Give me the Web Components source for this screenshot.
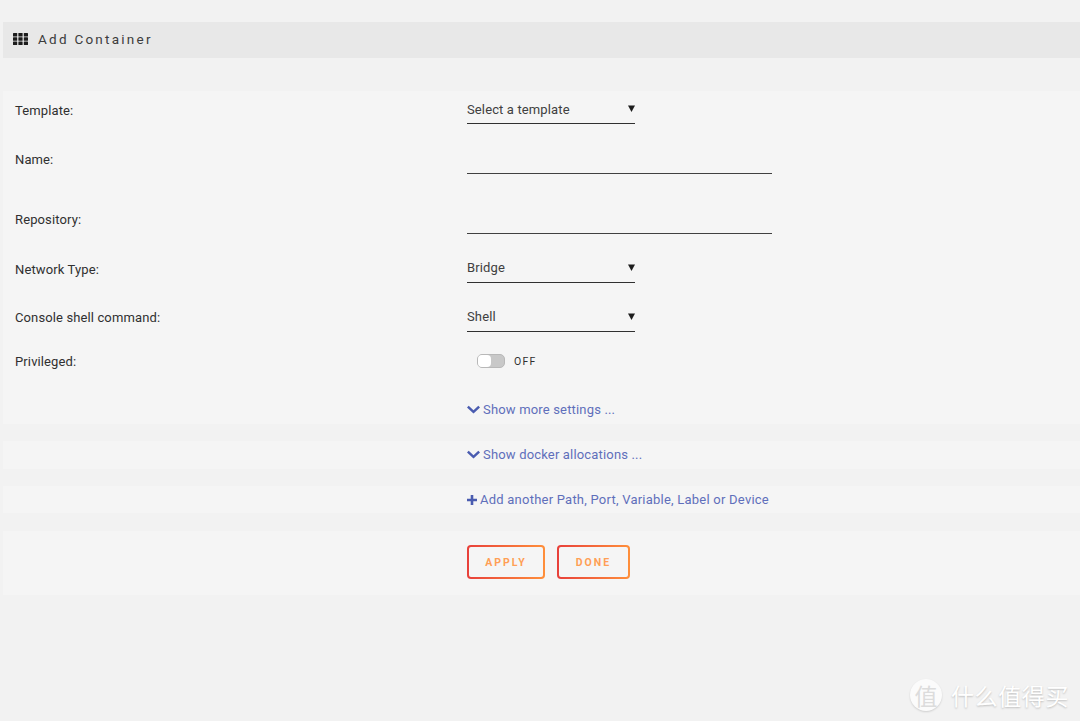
<!DOCTYPE html>
<html>
<head>
<meta charset="utf-8">
<title>Add Container</title>
<style>
  html, body { margin: 0; height: 100%; }
  body {
    background: #f2f2f2;
    padding: 22px 0 0 3px;
    box-sizing: border-box;
    overflow: hidden;
    position: relative;
    font-family: Roboto, "Open Sans", sans-serif;
    color: #303030;
  }
</style>
</head>
<body>
<title-bar>Add Container</title-bar>

<form-panel top="33" height="333">
  <form-row label="Template:" label-bottom="3" height="33"><drop-down value="Select a template"></drop-down></form-row>
  <form-row label="Name:" height="50"><text-line></text-line></form-row>
  <form-row label="Repository:" height="60"><text-line></text-line></form-row>
  <form-row label="Network Type:" label-bottom="3" height="49"><drop-down value="Bridge" text-bottom="4"></drop-down></form-row>
  <form-row label="Console shell command:" height="49"><drop-down value="Shell" text-bottom="4"></drop-down></form-row>
  <form-row label="Privileged:" height="58" pad-top="1" plain><off-switch></off-switch></form-row>
  <form-row height="34" pad-top="5" plain><link-line icon="chevron">Show more settings ...</link-line></form-row>
</form-panel>

<form-panel top="17" height="28">
  <form-row height="28" pad-bottom="2" plain><link-line icon="chevron">Show docker allocations ...</link-line></form-row>
</form-panel>

<form-panel top="17" height="27">
  <form-row height="27" plain><link-line icon="plus" spacing=".23">Add another Path, Port, Variable, Label or Device</link-line></form-row>
</form-panel>

<form-panel top="18" height="64">
  <form-row height="64" pad-bottom="2" plain>
    <button-pair>
      <grad-button width="78">APPLY</grad-button>
      <grad-button width="73">DONE</grad-button>
    </button-pair>
  </form-row>
</form-panel>

<water-mark></water-mark>

<script>
class TitleBar extends HTMLElement {
  constructor() {
    super();
    this.attachShadow({ mode: "open" });
    this.shadowRoot.innerHTML = `
      <style>
        :host {
          display: flex;
          align-items: center;
          height: 36px;
          padding-bottom: 2px;
          box-sizing: border-box;
          background: #e8e8e8;
          padding-left: 10px;
          font-size: 13.5px;
          letter-spacing: 2.25px;
          color: #3c3c3c;
        }
        svg { width: 15px; height: 12px; margin-right: 10px; margin-top: -1px; fill: #1c1c1c; }
      </style>
      <svg viewBox="0 0 15 12">
        <rect x="0" y="0" width="4.2" height="3.4" rx=".5"/><rect x="5.4" y="0" width="4.2" height="3.4" rx=".5"/><rect x="10.8" y="0" width="4.2" height="3.4" rx=".5"/>
        <rect x="0" y="4.3" width="4.2" height="3.4" rx=".5"/><rect x="5.4" y="4.3" width="4.2" height="3.4" rx=".5"/><rect x="10.8" y="4.3" width="4.2" height="3.4" rx=".5"/>
        <rect x="0" y="8.6" width="4.2" height="3.4" rx=".5"/><rect x="5.4" y="8.6" width="4.2" height="3.4" rx=".5"/><rect x="10.8" y="8.6" width="4.2" height="3.4" rx=".5"/>
      </svg>
      <slot></slot>
    `;
  }
}

class FormPanel extends HTMLElement {
  constructor() {
    super();
    this.attachShadow({ mode: "open" });
  }
  connectedCallback() {
    const top = this.getAttribute("top") || "0";
    const height = this.getAttribute("height") || "0";
    this.shadowRoot.innerHTML = `
      <style>
        :host {
          display: block;
          margin-top: ${top}px;
          height: ${height}px;
          background: #f5f5f5;
        }
      </style>
      <slot></slot>
    `;
  }
}

class FormRow extends HTMLElement {
  constructor() {
    super();
    this.attachShadow({ mode: "open" });
  }
  connectedCallback() {
    const label = this.getAttribute("label") || "";
    const height = this.getAttribute("height") || "40";
    const padTop = this.getAttribute("pad-top") || "0";
    const padBottom = this.getAttribute("pad-bottom") || "0";
    const labelBottom = this.getAttribute("label-bottom") || "4";
    // plain rows centre their content, field rows sit on the underline
    const plain = this.hasAttribute("plain");
    this.shadowRoot.innerHTML = `
      <style>
        :host {
          display: grid;
          grid-template-columns: 464px 1fr;
          box-sizing: border-box;
          height: ${height}px;
          padding: ${padTop}px 0 ${padBottom}px;
          align-items: ${plain ? "center" : "end"};
        }
        .label {
          padding-left: 12px;
          font-size: 13px;
          letter-spacing: .12px;
          line-height: 20px;
          color: #303030;
          margin-bottom: ${plain ? "0" : labelBottom + "px"};
        }
      </style>
      <div class="label">${label}</div>
      <div><slot></slot></div>
    `;
  }
}

class DropDown extends HTMLElement {
  constructor() {
    super();
    this.attachShadow({ mode: "open" });
  }
  connectedCallback() {
    const value = this.getAttribute("value") || "";
    const textBottom = this.getAttribute("text-bottom") || "2";
    this.shadowRoot.innerHTML = `
      <style>
        :host {
          display: flex;
          justify-content: space-between;
          align-items: center;
          box-sizing: border-box;
          width: 168px;
          height: 27px;
          padding-bottom: 2px;
          border-bottom: 1px solid #303030;
          font-size: 13px;
          letter-spacing: .13px;
          color: #404040;
        }
        span { padding-bottom: ${textBottom - 2}px; }
        svg { width: 7px; height: 7px; margin-top: -1px; fill: #1c1c1c; }
      </style>
      <span>${value}</span>
      <svg viewBox="0 0 7 7"><path d="M0 .5h7L3.5 7z"/></svg>
    `;
  }
}

class TextLine extends HTMLElement {
  constructor() {
    super();
    this.attachShadow({ mode: "open" });
    this.shadowRoot.innerHTML = `
      <style>
        :host {
          display: block;
          box-sizing: border-box;
          width: 305px;
          height: 27px;
          border-bottom: 1px solid #404040;
        }
      </style>
    `;
  }
}

class OffSwitch extends HTMLElement {
  constructor() {
    super();
    this.attachShadow({ mode: "open" });
    this.shadowRoot.innerHTML = `
      <style>
        :host {
          display: flex;
          align-items: center;
          padding-left: 10px;
          margin-top: -1px;
          font-size: 10.5px;
          letter-spacing: 1.2px;
          color: #303030;
        }
        .track {
          box-sizing: border-box;
          width: 28px;
          height: 14px;
          margin-right: 9px;
          border: 1px solid #b8b8b8;
          border-radius: 5px;
          background: #c8c8c8;
        }
        .knob {
          width: 13px;
          height: 12px;
          border-radius: 4px;
          background: #fff;
        }
      </style>
      <div class="track"><div class="knob"></div></div>
      <span>OFF</span>
    `;
  }
}

class LinkLine extends HTMLElement {
  constructor() {
    super();
    this.attachShadow({ mode: "open" });
  }
  connectedCallback() {
    const icon = this.getAttribute("icon");
    const spacing = this.getAttribute("spacing") || ".17";
    const svg = icon === "plus"
      ? `<svg style="width:10px;height:10px;margin-right:3px" viewBox="0 0 10 10"><path d="M3.7 0h2.6v3.7H10v2.6H6.3V10H3.7V6.3H0V3.7h3.7z"/></svg>`
      : `<svg style="width:13px;height:9px;margin-right:3px" viewBox="0 0 13 9"><path d="M1.7 .7 6.5 5.3 11.3 .7 13 2.4 6.5 8.6 0 2.4z"/></svg>`;
    this.shadowRoot.innerHTML = `
      <style>
        :host {
          display: flex;
          align-items: center;
          font-size: 13px;
          letter-spacing: ${spacing}px;
          color: #5f6fbb;
        }
        svg { fill: #4a5cb0; flex: none; }
      </style>
      ${svg}<slot></slot>
    `;
  }
}

class ButtonPair extends HTMLElement {
  constructor() {
    super();
    this.attachShadow({ mode: "open" });
    this.shadowRoot.innerHTML = `
      <style>
        :host { display: flex; gap: 12px; }
      </style>
      <slot></slot>
    `;
  }
}

class GradButton extends HTMLElement {
  constructor() {
    super();
    this.attachShadow({ mode: "open" });
  }
  connectedCallback() {
    const width = this.getAttribute("width") || "78";
    this.shadowRoot.innerHTML = `
      <style>
        :host {
          display: flex;
          align-items: center;
          justify-content: center;
          box-sizing: border-box;
          width: ${width}px;
          height: 34px;
          border: 2px solid transparent;
          border-radius: 4px;
          background:
            linear-gradient(#f5f5f5, #f5f5f5) padding-box,
            linear-gradient(90deg, #e8403a, #ff8f3a) border-box;
          font-size: 10.5px;
          font-weight: 700;
          letter-spacing: 2px;
          color: #ff9f55;
        }
      </style>
      <slot></slot>
    `;
  }
}

class WaterMark extends HTMLElement {
  constructor() {
    super();
    this.attachShadow({ mode: "open" });
    this.shadowRoot.innerHTML = `
      <style>
        :host {
          position: absolute;
          right: 11px;
          bottom: 10px;
          display: flex;
          align-items: center;
          gap: 9px;
          font-family: "Noto Sans CJK SC", sans-serif;
          color: #fff;
          text-shadow: 0 1px 2px rgba(0,0,0,.22);
        }
        .badge {
          width: 32px;
          height: 32px;
          border-radius: 50%;
          background: #fbfbfb;
          box-shadow: 0 1px 2px rgba(0,0,0,.15);
          display: flex;
          align-items: center;
          justify-content: center;
          font-size: 23px;
          line-height: 1;
          color: #dcdcdc;
          text-shadow: none;
        }
        .name { font-size: 23px; line-height: 1; letter-spacing: .6px; }
      </style>
      <div class="badge">值</div>
      <div class="name">什么值得买</div>
    `;
  }
}

customElements.define("title-bar", TitleBar);
customElements.define("form-panel", FormPanel);
customElements.define("form-row", FormRow);
customElements.define("drop-down", DropDown);
customElements.define("text-line", TextLine);
customElements.define("off-switch", OffSwitch);
customElements.define("link-line", LinkLine);
customElements.define("button-pair", ButtonPair);
customElements.define("grad-button", GradButton);
customElements.define("water-mark", WaterMark);
</script>
</body>
</html>
